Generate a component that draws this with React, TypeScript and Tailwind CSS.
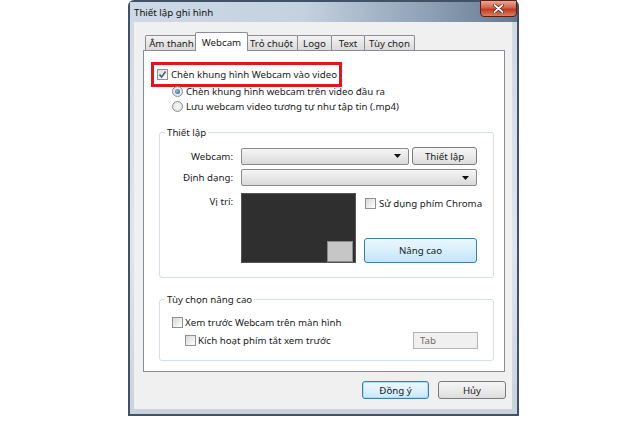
import React from "react";

function Check({ checked }: { checked?: boolean }) {
  return (
    <span className="w-[11px] h-[11px] border border-[#8e8f8f] bg-[linear-gradient(135deg,#d9d9d9,#ffffff)] flex items-center justify-center shrink-0">
      {checked && (
        <svg width="9" height="9" viewBox="0 0 9 9">
          <path d="M1.5 4.6 L3.6 7 L7.6 1.6" stroke="#4b5a8f" strokeWidth="1.6" fill="none" />
        </svg>
      )}
    </span>
  );
}

function Radio({ checked }: { checked?: boolean }) {
  return (
    <span className="w-[11px] h-[11px] rounded-full border border-[#8e8f8f] bg-[radial-gradient(circle,#ffffff,#d6d6d6)] flex items-center justify-center shrink-0">
      {checked && (
        <span className="w-[5px] h-[5px] rounded-full bg-[radial-gradient(circle_at_40%_40%,#9cc0ea,#1f4f90)]" />
      )}
    </span>
  );
}

function Arrow() {
  return (
    <svg width="7" height="4" viewBox="0 0 7 4">
      <path d="M0 0H7L3.5 4Z" fill="#111" />
    </svg>
  );
}

const tabs: { label: string; w: string; sel?: boolean }[] = [
  { label: "Âm thanh", w: "w-[53px]" },
  { label: "Webcam", w: "w-[53px]", sel: true },
  { label: "Trỏ chuột", w: "w-[53px]" },
  { label: "Logo", w: "w-[35px]" },
  { label: "Text", w: "w-[34px]" },
  { label: "Tùy chọn", w: "w-[51px]" },
];

export default function App() {
  return (
    <div className="w-[640px] h-[421px] bg-white font-['Noto_Sans',sans-serif] text-[9.7px] leading-[15px] text-[#1b1b1b] whitespace-nowrap">
      <div className="ml-[128px] w-[391px] h-[416px] border-2 border-[#415266] rounded-t-[6px] bg-[linear-gradient(180deg,#cfd9e4,#dfe5ec_60%,#c9d3de)] flex flex-col">
        <div className="relative h-[20px] shrink-0 bg-[linear-gradient(90deg,#cdd9e6,#c4d1df_45%,#8c9fb4_78%,#64788f)] flex items-center pl-[4px]">
          <span className="text-[#111]">Thiết lập ghi hình</span>
          <div className="absolute right-0 top-[-2px] w-[37px] h-[17px] border border-[#5a1e15] rounded-b-[4px] bg-[linear-gradient(180deg,#eaa896,#d3634a_45%,#c2391f_55%,#dc7f60)] flex items-center justify-center">
            <svg width="11" height="9" viewBox="0 0 11 9">
              <path d="M1.5 1 L9.5 8 M9.5 1 L1.5 8" stroke="#4a1a12" strokeWidth="3.2" strokeLinecap="round" />
              <path d="M1.5 1 L9.5 8 M9.5 1 L1.5 8" stroke="#ffffff" strokeWidth="1.8" strokeLinecap="round" />
            </svg>
          </div>
        </div>
        <div className="ml-[4px] mr-[5px] mb-[5px] flex-1 bg-[#f0f0f0] flex flex-col pt-[10px] pl-[9px]">
          <div className="relative z-10 flex items-end h-[19px] mb-[-1px] pl-[2px]">
            {tabs.map((t, i) =>
              t.sel ? (
                <div
                  key={t.label}
                  className={`${t.w} h-[19px] ml-[-3px] mr-[-2px] bg-white border border-b-0 border-[#898c95] rounded-t-[2px] flex items-center justify-center relative z-10`}
                >
                  {t.label}
                </div>
              ) : (
                <div
                  key={t.label}
                  className={`${t.w} h-[15px] mb-[1px] ${i === 0 ? "" : "ml-[-1px]"} bg-[linear-gradient(180deg,#f4f4f4,#e6e6e6_50%,#dadada)] border border-b-0 border-[#898c95] rounded-t-[2px] flex items-center justify-center`}
                >
                  {t.label}
                </div>
              )
            )}
          </div>
          <div className="w-[362px] h-[322px] border border-[#898c95] bg-white flex flex-col">
            <div className="ml-[7px] mt-[11px] w-[191px] h-[25px] border-[3px] border-[#e2151d] flex items-center pl-[3px] gap-[3px]">
              <Check checked />
              <span>Chèn khung hình Webcam vào video</span>
            </div>
            <div className="ml-[28px] mt-[-3px] flex flex-col">
              <div className="h-[15px] flex items-center gap-[3px]">
                <Radio checked />
                <span>Chèn khung hình webcam trên video đầu ra</span>
              </div>
              <div className="h-[15px] flex items-center gap-[3px]">
                <Radio />
                <span>Lưu webcam video tương tự như tập tin (.mp4)</span>
              </div>
            </div>

            <div className="ml-[15px] mt-[18px] w-[335px] border border-[#d5dfe5] rounded-[3px] pb-[14px] flex flex-col">
              <div className="mt-[-8px] ml-[5px] px-[2px] bg-white w-fit h-[15px]">Thiết lập</div>
              <div className="mt-[7px] h-[18px] flex items-center">
                <span className="w-[73px] text-right">Webcam:</span>
                <div className="ml-[8px] w-[168px] h-[17px] border border-[#8a8a8a] rounded-[2px] bg-[linear-gradient(180deg,#f5f5f5,#e8e8e8_50%,#d9d9d9)] flex items-center justify-end pr-[7px]">
                  <Arrow />
                </div>
                <div className="ml-[3px] w-[65px] h-[18px] border border-[#7a7a7a] rounded-[3px] bg-[linear-gradient(180deg,#f4f4f4,#ebebeb_50%,#dcdcdc)] flex items-center justify-center">
                  Thiết lập
                </div>
              </div>
              <div className="mt-[4px] h-[17px] flex items-center">
                <span className="w-[73px] text-right">Định dạng:</span>
                <div className="ml-[8px] w-[236px] h-[17px] border border-[#8a8a8a] rounded-[2px] bg-[linear-gradient(180deg,#f5f5f5,#e8e8e8_50%,#d9d9d9)] flex items-center justify-end pr-[7px]">
                  <Arrow />
                </div>
              </div>
              <div className="mt-[7px] flex">
                <span className="w-[73px] text-right pt-[1px]">Vị trí:</span>
                <div className="ml-[8px] w-[115px] h-[70px] bg-[#2f2f2f] border border-[#555] flex items-end justify-end pr-[2px]">
                  <div className="w-[26px] h-[21px] bg-[#c6c6c6] border border-[#8a8a8a]" />
                </div>
                <div className="ml-[8px] flex flex-col">
                  <div className="mt-[3px] h-[15px] flex items-center gap-[3px] pl-[1px]">
                    <Check />
                    <span>Sử dụng phím Chroma</span>
                  </div>
                  <div className="mt-[27px] w-[113px] h-[25px] border border-[#3c7fb1] rounded-[3px] bg-[linear-gradient(180deg,#eaf6fd,#d9f0fc_50%,#bee6fd)] flex items-center justify-center">
                    Nâng cao
                  </div>
                </div>
              </div>
            </div>

            <div className="ml-[15px] mt-[21px] w-[335px] border border-[#d5dfe5] rounded-[3px] pb-[11px] flex flex-col">
              <div className="mt-[-8px] ml-[5px] px-[2px] bg-white w-fit h-[15px]">Tùy chọn nâng cao</div>
              <div className="mt-[8px] h-[15px] flex items-center gap-[2px] pl-[12px]">
                <Check />
                <span>Xem trước Webcam trên màn hình</span>
              </div>
              <div className="mt-[2px] h-[17px] flex items-center">
                <div className="flex items-center gap-[2px] pl-[25px]">
                  <Check />
                  <span>Kích hoạt phím tắt xem trước</span>
                </div>
                <div className="ml-auto mr-[15px] w-[65px] h-[17px] border border-[#b4b4b4] bg-[#f0f0f0] flex items-center pl-[6px] text-[#6d6d6d]">
                  Tab
                </div>
              </div>
            </div>
          </div>
          <div className="mt-[9px] flex justify-end gap-[9px] pr-[6px]">
            <div className="w-[67px] h-[18px] border border-[#3c7fb1] rounded-[3px] bg-[linear-gradient(180deg,#eef7fd,#dff1fc_50%,#c7e8fb)] shadow-[inset_0_0_0_1px_#a8def9] flex items-center justify-center">
              Đồng ý
            </div>
            <div className="w-[68px] h-[18px] border border-[#7a7a7a] rounded-[3px] bg-[linear-gradient(180deg,#f4f4f4,#ebebeb_50%,#dcdcdc)] flex items-center justify-center">
              Hủy
            </div>
          </div>
        </div>
      </div>
    </div>
  );
}
